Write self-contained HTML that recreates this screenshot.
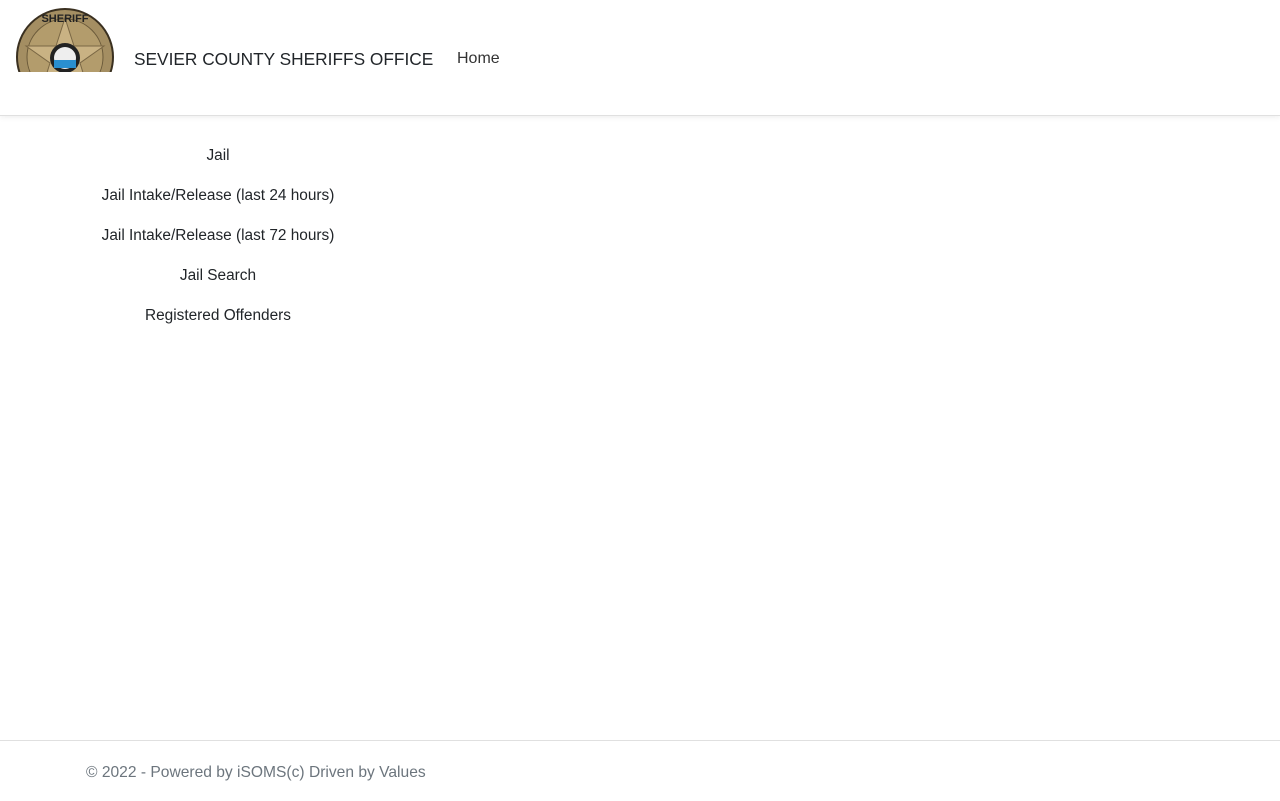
<!DOCTYPE html>
<html><head><meta charset="utf-8"><style>
body{margin:0;font-family:"Liberation Sans","DejaVu Sans",sans-serif;color:#212529;background:#fff;width:1280px;height:800px;position:relative;overflow:hidden}
header{height:115px;border-bottom:1px solid #e0e0e0;box-shadow:0 2px 5px rgba(0,0,0,.06);position:relative}
.logo{position:absolute;left:16px;top:8px;width:98px;height:64px;overflow:hidden}
.brand{position:absolute;left:134px;top:49px;font-size:17.3px;color:#212529;white-space:nowrap}
.home{position:absolute;left:457px;top:50px;font-size:16px;color:#333}
.side{position:absolute;left:0;top:145px;width:436px;text-align:center;font-size:15.4px}
.side div{height:40px;line-height:22px}
footer{position:absolute;top:740px;left:0;right:0;border-top:1px solid #e0e0e0;height:60px}
footer span{position:absolute;left:86px;top:23px;font-size:15.6px;color:#6c757d;white-space:nowrap}
</style></head><body>
<header>
<div class="logo"><svg width="98" height="98" viewBox="0 0 98 98">
<circle cx="49" cy="49" r="48" fill="#a48e62" stroke="#3a3020" stroke-width="2"/>
<circle cx="49" cy="49" r="38" fill="#b39c6c" stroke="#6b5a3a" stroke-width="1"/>
<polygon points="49,10 58,38 88,38 64,55 73,84 49,66 25,84 34,55 10,38 40,38" fill="#c9b283" stroke="#7a6744" stroke-width="1"/>
<circle cx="49" cy="50" r="15" fill="#222"/>
<circle cx="49" cy="50" r="11" fill="#eee"/>
<rect x="38" y="52" width="22" height="8" fill="#2a8fd0"/>
<text x="49" y="14" font-size="11" font-weight="bold" text-anchor="middle" fill="#222" font-family="Liberation Sans">SHERIFF</text>
</svg></div>
<div class="brand">SEVIER COUNTY SHERIFFS OFFICE</div>
<div class="home">Home</div>
</header>
<div class="side">
<div>Jail</div>
<div>Jail Intake/Release (last 24 hours)</div>
<div>Jail Intake/Release (last 72 hours)</div>
<div>Jail Search</div>
<div>Registered Offenders</div>
</div>
<footer><span>© 2022 - Powered by iSOMS(c) Driven by Values</span></footer>
</body></html>
